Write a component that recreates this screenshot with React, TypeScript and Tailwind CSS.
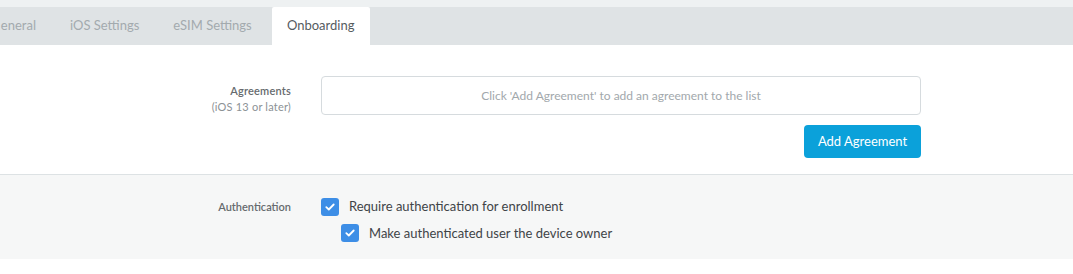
import React from "react";

function Check() {
  return (
    <span className="flex h-[18px] w-[18px] shrink-0 items-center justify-center rounded-[3px] bg-[#3d8ee6]">
      <svg width="10" height="8" viewBox="0 0 10 8" fill="none">
        <path d="M1.3 4.2 L3.8 6.5 L8.7 1.5" stroke="white" strokeWidth="1.8" strokeLinecap="round" strokeLinejoin="round" />
      </svg>
    </span>
  );
}

export default function App() {
  return (
    <div className="h-[274px] w-[1073px] overflow-hidden bg-white font-['Lato',sans-serif]">
      <div className="h-[7px] bg-[#eef1f2]" />
      <div className="flex h-[38px] items-stretch bg-[#dfe3e5] text-[13px] text-[#a3aaae]">
        <div className="flex w-[36px] items-center justify-end overflow-hidden whitespace-nowrap">eneral</div>
        <div className="flex items-center px-[34px]">iOS Settings</div>
        <div className="flex items-center">eSIM Settings</div>
        <div className="ml-[20px] flex w-[98px] items-center justify-center rounded-t-[2px] bg-white text-[#555b5f]">Onboarding</div>
      </div>
      <div className="flex h-[130px] border-b border-[#dde2e4] pt-[31px]">
        <div className="w-[291px] pt-[7px] text-right text-[11px] leading-[16px] tracking-[0.2px]">
          <div className="font-semibold text-[#666b6e]">Agreements</div>
          <div className="text-[#8c9296]">(iOS 13 or later)</div>
        </div>
        <div className="ml-[30px] flex w-[600px] flex-col items-end">
          <div className="flex h-[39px] w-full items-center justify-center rounded-[4px] border border-[#d6dbde] text-[12px] text-[#a2a8ac]">
            Click 'Add Agreement' to add an agreement to the list
          </div>
          <button className="mt-[10px] h-[33px] w-[117px] rounded-[4px] bg-[#0ba1da] text-[13px] text-white">
            Add Agreement
          </button>
        </div>
      </div>
      <div className="flex h-[84px] bg-[#f6f7f7] pt-[22px]">
        <div className="w-[291px] pt-[2px] text-right text-[11px] font-semibold text-[#666b6e]">Authentication</div>
        <div className="ml-[30px] flex flex-col gap-[7px] text-[13px] text-[#3f4447]">
          <label className="flex items-center gap-[10px]">
            <Check />
            <span>Require authentication for enrollment</span>
          </label>
          <label className="ml-[20px] flex items-center gap-[10px]">
            <Check />
            <span>Make authenticated user the device owner</span>
          </label>
        </div>
      </div>
    </div>
  );
}
